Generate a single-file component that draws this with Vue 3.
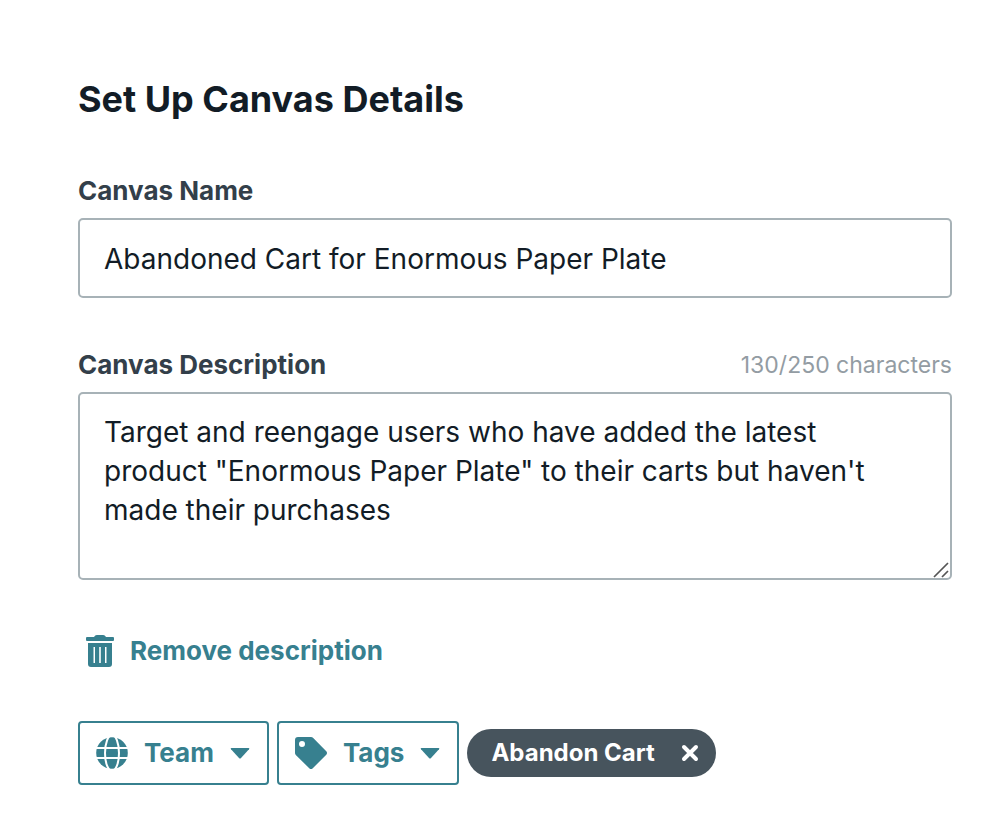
<script setup>
import { ref, computed } from 'vue'

const name = ref('Abandoned Cart for Enormous Paper Plate')
const description = ref(
  'Target and reengage users who have added the latest product "Enormous Paper Plate" to their carts but haven\'t made their purchases'
)
const limit = 250
const used = computed(() => description.value.length)
const showDescription = ref(true)
const tags = ref(['Abandon Cart'])

function removeTag(tag) {
  tags.value = tags.value.filter((t) => t !== tag)
}
</script>

<template>
  <main class="page">
    <h1 class="title">Set Up Canvas Details</h1>

    <section class="field">
      <label class="label" for="canvas-name">Canvas Name</label>
      <input id="canvas-name" v-model="name" class="control name" type="text" />
    </section>

    <section v-if="showDescription" class="field description">
      <div class="label-row">
        <label class="label" for="canvas-description">Canvas Description</label>
        <span class="counter">{{ used }}/{{ limit }} characters</span>
      </div>
      <div class="area">
        <textarea
          id="canvas-description"
          v-model="description"
          class="control text"
          rows="4"
          :maxlength="limit"
          spellcheck="false"
        ></textarea>
        <svg class="grip" viewBox="0 0 16 16" aria-hidden="true">
          <path d="M1 15 15 1M9 15l6-6" fill="none" stroke="#555" stroke-width="1.7" />
        </svg>
      </div>
    </section>

    <button class="remove" type="button" @click="showDescription = false">
      <svg class="trash" viewBox="0 0 28 32" aria-hidden="true">
        <path
          fill="currentColor"
          fill-rule="evenodd"
          d="M11 0h6q1.500 0 2.200 1l.8 1h7q1 0 1 1v2q0 1-1 1H1q-1 0-1-1V3q0-1 1-1h7l.8-1Q9.500 0 11 0ZM2 8h24v21q0 3-3 3H5q-3 0-3-3ZM7.500 12v16h1.500V12ZM13.200 12v16h1.600V12ZM19 12v16h1.500V12Z"
        />
      </svg>
      <span>Remove description</span>
    </button>

    <div class="actions">
      <button class="picker" type="button">
        <svg class="icon" viewBox="0 0 32 32" aria-hidden="true">
          <circle cx="16" cy="16" r="15.800" fill="currentColor" />
          <g fill="none" stroke="#fff" stroke-width="2">
            <ellipse cx="16" cy="16" rx="7" ry="18" />
            <path d="M0 11h32M0 21h32" />
          </g>
        </svg>
        <span>Team</span>
        <svg class="caret" viewBox="0 0 20 12" aria-hidden="true">
          <path fill="currentColor" d="M1.500 1h17q1.500 0 .5 1.200L11 11q-1 1-2 0L1 2.200Q0 1 1.500 1Z" />
        </svg>
      </button>
      <button class="picker" type="button">
        <svg class="icon" viewBox="0 0 32 32" aria-hidden="true">
          <path
            fill="currentColor"
            fill-rule="evenodd"
            d="M3 0h13q1.200 0 2 .8L31.500 14.500q1 1.500 0 3L17.500 31.500q-1.500 1-3 0L.8 18Q0 17 0 16V3Q0 0 3 0ZM7 4a3 3 0 1 0 0 6 3 3 0 0 0 0-6Z"
          />
        </svg>
        <span>Tags</span>
        <svg class="caret" viewBox="0 0 20 12" aria-hidden="true">
          <path fill="currentColor" d="M1.500 1h17q1.500 0 .5 1.200L11 11q-1 1-2 0L1 2.200Q0 1 1.500 1Z" />
        </svg>
      </button>
      <span v-for="tag in tags" :key="tag" class="chip">
        {{ tag }}
        <button class="close" type="button" :aria-label="`Remove ${tag}`" @click="removeTag(tag)">
          <svg viewBox="0 0 20 20" aria-hidden="true">
            <path d="m4 4 12 12M16 4 4 16" fill="none" stroke="#fff" stroke-width="4" stroke-linecap="round" />
          </svg>
        </button>
      </span>
    </div>
  </main>
</template>

<style>
body {
  background: #fff;
}
</style>

<style scoped>
.page {
  box-sizing: border-box;
  padding: 75px 48px 52px 78px;
  color: #121c26;
  font-family: Inter, sans-serif;
}

.title {
  margin: 0 0 52px;
  font-size: 36px;
  line-height: 48px;
  font-weight: 700;
}

.field {
  display: flex;
  flex-direction: column;
  gap: 11px;
}

.description {
  margin-top: 51px;
}

.label {
  color: #333f4a;
  font-size: 26px;
  line-height: 32px;
  font-weight: 700;
}

.label-row {
  display: flex;
  align-items: center;
  justify-content: space-between;
}

.counter {
  color: #939ca3;
  font-size: 23px;
  line-height: 32px;
}

.control {
  display: block;
  box-sizing: border-box;
  width: 100%;
  margin: 0;
  border: 2px solid #a7b2b7;
  border-radius: 5px;
  background: #fff;
  color: inherit;
  font-family: inherit;
  font-size: 28px;
  outline: none;
}

.name {
  padding: 20px 24px 18px;
  line-height: 38px;
}

.area {
  position: relative;
}

.text {
  padding: 19px 48px 9px 24px;
  line-height: 39px;
  resize: none;
  overflow: auto;
}

.grip {
  position: absolute;
  right: 3px;
  bottom: 2px;
  width: 16px;
  height: 16px;
  pointer-events: none;
}

.remove {
  display: flex;
  align-items: center;
  gap: 16px;
  margin: 54px 0 0;
  padding: 0 8px;
  border: 0;
  background: none;
  color: #37808f;
  font: 700 26px/34px Inter, sans-serif;
  cursor: pointer;
}

.trash {
  width: 28px;
  height: 32px;
}

.actions {
  display: flex;
  flex-wrap: wrap;
  align-items: center;
  gap: 8px;
  margin-top: 53px;
}

.picker {
  display: flex;
  align-items: center;
  gap: 16px;
  box-sizing: border-box;
  height: 64px;
  padding: 0 17px 0 16px;
  border: 2px solid #37808f;
  border-radius: 4px;
  background: #fff;
  color: #37808f;
  font: 700 26px/34px Inter, sans-serif;
  cursor: pointer;
}

.icon {
  width: 32px;
  height: 32px;
}

.caret {
  width: 20px;
  height: 12px;
}

.chip {
  display: flex;
  align-items: center;
  gap: 25px;
  height: 48px;
  padding: 0 16px 0 24px;
  border-radius: 24px;
  background: #47545d;
  color: #fff;
  font-size: 24px;
  line-height: 32px;
  font-weight: 700;
}

.close {
  display: flex;
  padding: 0;
  border: 0;
  background: none;
  cursor: pointer;
}

.close svg {
  width: 20px;
  height: 20px;
}
</style>
